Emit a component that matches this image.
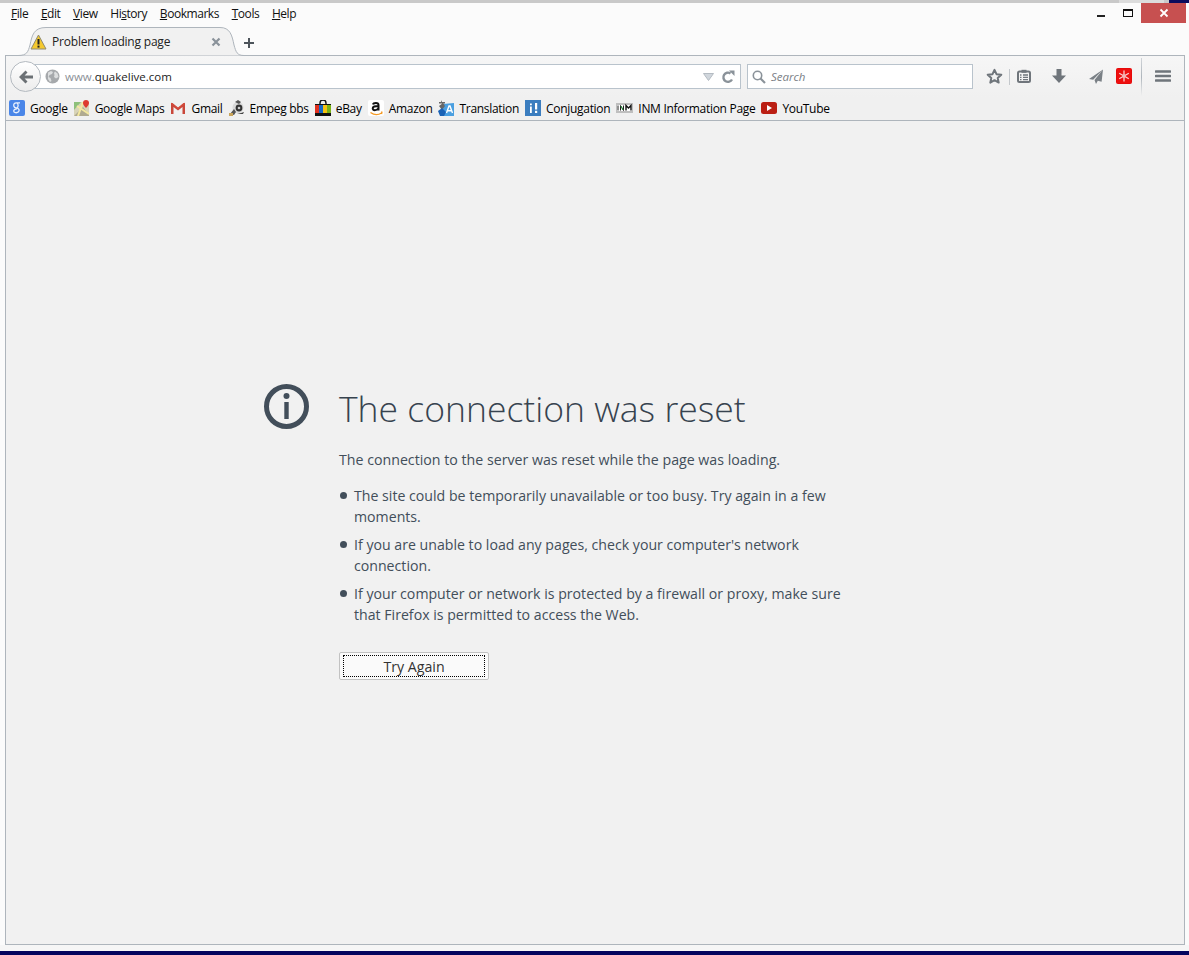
<div class="window">
  <div class="edge"><span class="edge-a"></span><span class="edge-b"></span><span class="edge-c"></span><span class="edge-d"></span></div>

  <div class="menubar">
    <nav class="menus">
      <span><u>F</u>ile</span>
      <span><u>E</u>dit</span>
      <span><u>V</u>iew</span>
      <span>Hi<u>s</u>tory</span>
      <span><u>B</u>ookmarks</span>
      <span><u>T</u>ools</span>
      <span><u>H</u>elp</span>
    </nav>
    <div class="winctl">
      <span class="min"></span>
      <span class="max"></span>
      <span class="close">
        <svg width="10" height="10" viewBox="0 0 10 10"><path d="M1.5 1.5l7 7M8.5 1.5l-7 7" stroke="#fff" stroke-width="1.8"/></svg>
      </span>
    </div>
  </div>

  <div class="tabstrip">
    <div class="tab">
      <svg class="tabshape" width="226" height="29" viewBox="0 0 226 29">
        <path d="M0 28.5C9 28.5 10 25 12 18 14 8 16 .5 28 .5H202C212 .5 214 8 216 18 218 25 219 28.5 226 28.5" fill="#f1f1f1" stroke="#aeb5bc"/>
      </svg>
      <svg class="ticon" width="17" height="16" viewBox="0 0 17 16">
        <path d="M8.5 1L16 15H1z" fill="#f5c92e" stroke="#8f8a70" stroke-linejoin="round"/>
        <path d="M8.5 5v5.5" stroke="#222" stroke-width="2"/><rect x="7.5" y="11.6" width="2" height="2" fill="#222"/>
      </svg>
      <span class="tabtitle">Problem loading page</span>
      <svg class="tabclose" width="10" height="10" viewBox="0 0 10 10"><path d="M1.5 1.5l7 7M8.5 1.5l-7 7" stroke="#8a929a" stroke-width="2.2"/></svg>
    </div>
    <svg class="plus" width="12" height="12" viewBox="0 0 12 12"><path d="M6 1v10M1 6h10" stroke="#4d545b" stroke-width="2"/></svg>
  </div>

  <div class="frame">
    <div class="toolbar">
      <div class="back">
        <svg width="16" height="14" viewBox="0 0 16 14"><path d="M7.5 0.5L1 7l6.5 6.5 2-2L6.6 8.6H15V5.4H6.6L9.5 2.5z" fill="#6b7074"/></svg>
      </div>
      <div class="urlbar">
        <svg class="globe" width="15" height="15" viewBox="0 0 15 15"><circle cx="7.5" cy="7.5" r="7" fill="#a6a9ac"/><path d="M3 3.5l3-1.5 2 1-1 2-2.5 1L3.500 8l2 1 1 3-1.500 1-2-3zM10 2.500l2.500 2L13.500 8 11 9.500 9 8l.5-2L9 4z" fill="#dcdedf"/></svg>
        <span class="url"><span class="www">www.</span>quakelive.com</span>
        <svg class="drop" width="11" height="8" viewBox="0 0 11 8"><path d="M.5.500h10L5.500 7.500z" fill="#d0d6dc" stroke="#b4bbc2"/></svg>
        <svg class="reload" width="14" height="14" viewBox="0 0 14 14"><path d="M11 9.500A4.600 4.600 0 1 1 9.500 3.400" fill="none" stroke="#8a9299" stroke-width="2.400"/><path d="M8 0.500h5.500V6z" fill="#8a9299"/></svg>
      </div>
      <div class="search">
        <svg width="14" height="14" viewBox="0 0 14 14"><circle cx="5.500" cy="5.500" r="4.200" fill="none" stroke="#8a9299" stroke-width="1.600"/><path d="M8.500 8.500L13 13" stroke="#8a9299" stroke-width="2.200"/></svg>
        <span>Search</span>
      </div>
      <div class="tools">
        <svg class="t-star" width="17" height="16" viewBox="0 0 17 16"><path d="M8.500 1.800l2 4.400 4.800.5-3.600 3.200 1 4.700-4.200-2.400-4.200 2.400 1-4.700L1.700 6.700l4.800-.5z" fill="none" stroke="#6f757b" stroke-width="2" stroke-linejoin="round"/></svg>
        <span class="t-sep"></span>
        <svg class="t-clip" width="14" height="14" viewBox="0 0 14 14"><rect x="1" y="2.500" width="12" height="10.500" rx="1.500" fill="none" stroke="#6f757b" stroke-width="2"/><path d="M4.500 .8h5v3h-5z" fill="#6f757b"/><path d="M3 6h1.500M6 6h5M3 8.300h1.500M6 8.300h5M3 10.600h1.500M6 10.600h5" stroke="#6f757b" stroke-width="1.300"/></svg>
        <svg class="t-down" width="14" height="14" viewBox="0 0 14 14"><path d="M4.500 0h5v6.500H14L7 14 0 6.500h4.500z" fill="#6f757b"/></svg>
        <svg class="t-plane" width="14" height="15" viewBox="0 0 14 15"><path d="M14 .5L0 10l4.200.8zM14 .5L5.500 11 7 15l1.800-3.200 3.800 1z" fill="#7a8086"/></svg>
        <svg class="t-red" width="16" height="16" viewBox="0 0 16 16"><rect width="16" height="16" rx="2" fill="#e60a0a"/><path d="M1 1h14v14H1z" fill="#ee0f0f"/><path d="M8 2.500v11M3.200 5.200l9.600 5.600M3.200 10.800l9.600-5.600" stroke="#f8d0d0" stroke-width="1.300"/><circle cx="8" cy="8" r="1.800" fill="#f3b5b5"/></svg>
        <span class="t-sep2"></span>
        <svg class="t-menu" width="16" height="12" viewBox="0 0 16 12"><path d="M1 1.500h14M1 6h14M1 10.500h14" stroke="#6f757b" stroke-width="2.600" stroke-linecap="round"/></svg>
      </div>
    </div>

    <div class="bookmarks">
      <span class="bm">
        <svg width="16" height="16" viewBox="0 0 16 16"><rect width="16" height="16" rx="2" fill="#4a86e8"/><path d="M11 2.800H7.500C5 2.800 4.500 4.800 4.800 6c.3 1.500 1.800 2 3.200 1.800 2 1 2.800 2.500 1.500 4-1.500 1.500-4.800 1.200-4.800-.8 0-1.500 2-2.200 3.300-2M8 3c1.500 1 1.500 4 0 4.800" fill="none" stroke="#e8f0fd" stroke-width="1.300"/></svg>
        Google
      </span>
      <span class="bm">
        <svg width="16" height="16" viewBox="0 0 16 16"><rect y="2" width="15" height="14" fill="#d8d4b8"/><path d="M0 2h7L0 10z" fill="#8dc07a"/><path d="M0 16l9-9 6 8v1z" fill="#b0aa90"/><path d="M3 6l12 8M9 2L4 16" stroke="#f4e9a0" stroke-width="2"/><path d="M12 0a3 3 0 0 1 3 3c0 2-3 5-3 5S9 5 9 3a3 3 0 0 1 3-3z" fill="#dd3a30"/></svg>
        Google Maps
      </span>
      <span class="bm">
        <svg width="16" height="16" viewBox="0 0 16 16"><path d="M1 3v11h2.500V7L8 10.500 12.500 7v7H15V3h-1.500L8 7.500 2.500 3z" fill="#c9473a"/><path d="M1 3l7 5.500L15 3" fill="none" stroke="#d94a3a" stroke-width="1"/></svg>
        Gmail
      </span>
      <span class="bm">
        <svg width="16" height="16" viewBox="0 0 16 16"><circle cx="9" cy="7.500" r="5.500" fill="#d9d9d9"/><circle cx="10" cy="8" r="3.400" fill="#333"/><circle cx="10" cy="8" r="1.300" fill="#ccc"/><path d="M6 2l3-2 3 2-2 2zM1 14l4-5 2 3-2 3z" fill="#555"/><rect x="0" y="13" width="4" height="3" fill="#c8a45a"/><path d="M8 14h6l1-2-3 1z" fill="#444"/></svg>
        Empeg bbs
      </span>
      <span class="bm">
        <svg width="16" height="16" viewBox="0 0 16 16"><path d="M5 5V3a3 3 0 0 1 6 0v2" fill="none" stroke="#111" stroke-width="1.400"/><rect y="4" width="16" height="12" fill="#111"/><rect y="5" width="4" height="8" fill="#e0301e"/><rect x="4" y="5" width="4" height="8" fill="#1668c7"/><rect x="8" y="5" width="4" height="8" fill="#f5c211"/><rect x="12" y="5" width="4" height="8" fill="#7ab317"/></svg>
        eBay
      </span>
      <span class="bm">
        <svg width="16" height="16" viewBox="0 0 16 16"><rect width="16" height="16" rx="2" fill="#fff"/><path d="M5 4.500C5.500 2.500 10.500 2 10.500 5v5.500M10.500 6C7 6 4.500 6.500 4.700 8.500 5 11 9.500 10.500 10.500 8" fill="none" stroke="#111" stroke-width="2"/><path d="M2.500 12.500c3.500 2.500 8 2.500 11 .5M14 11.500l-.500 2.500" fill="none" stroke="#f59a23" stroke-width="1.400"/></svg>
        Amazon
      </span>
      <span class="bm">
        <svg width="16" height="16" viewBox="0 0 16 16"><path d="M5 4l11-1v13H5z" fill="#4a9fe0"/><path d="M3 0l1 2h3v1.500H1V2h2zM1 6l4-3 2 3-3 4z" fill="#666"/><path d="M0 11l4-3 4 4-2 4H2z" fill="#1b62b5"/><path d="M8.500 13L11 6h1l2.500 7M9.700 10.800h3.600" fill="none" stroke="#fff" stroke-width="1.400"/></svg>
        Translation
      </span>
      <span class="bm">
        <svg width="16" height="16" viewBox="0 0 16 16"><rect width="16" height="16" fill="#3b7dbf"/><path d="M5 6.500h1.800v6.500H5zM5 3.500h1.800v1.800H5zM10 3h2.200v6.500H10zM10 10.800h2.200V13H10z" fill="#fff"/></svg>
        Conjugation
      </span>
      <span class="bm">
        <svg width="17" height="16" viewBox="0 0 17 16"><rect y="3" width="17" height="10" fill="#bfbfbf"/><rect x="1" y="5" width="15" height="6" fill="#fff"/><path d="M2 5.500v5M4.500 10.500v-5l3 5v-5" fill="none" stroke="#222" stroke-width="1"/><path d="M5 6l2 4" stroke="#2a9a40"/><path d="M10 10.500v-5l2.500 2.500 2.500-2.500v5" fill="none" stroke="#111" stroke-width="1.400"/></svg>
        INM Information Page
      </span>
      <span class="bm">
        <svg width="16" height="16" viewBox="0 0 16 16"><rect y="2" width="16" height="12" rx="2.500" fill="#bb1f14"/><path d="M6 5l5 3-5 3z" fill="#fff"/></svg>
        YouTube
      </span>
    </div>

    <main class="page">
      <div class="error">
        <svg class="info" width="45" height="45" viewBox="0 0 45 45">
          <circle cx="22.500" cy="22.500" r="20" fill="none" stroke="#424e5a" stroke-width="5"/>
          <circle cx="22.500" cy="12" r="3" fill="#424e5a"/>
          <rect x="20.300" y="18" width="4.400" height="17" fill="#424e5a"/>
        </svg>
        <div class="body">
          <h1>The connection was reset</h1>
          <p>The connection to the server was reset while the page was loading.</p>
          <ul>
            <li>The site could be temporarily unavailable or too busy. Try again in a few<br>moments.</li>
            <li>If you are unable to load any pages, check your computer's network<br>connection.</li>
            <li>If your computer or network is protected by a firewall or proxy, make sure<br>that Firefox is permitted to access the Web.</li>
          </ul>
          <button><span>Try Again</span></button>
        </div>
      </div>
    </main>
  </div>

  <div class="taskbar"></div>
</div>

<style>
  :global(body) { margin: 0; background: #fbfbfb; }
  .window {
    width: 1189px; height: 955px; overflow: hidden;
    display: flex; flex-direction: column;
    background: #fbfbfb;
    font-family: "Open Sans", "Noto Sans", sans-serif;
  }
  .edge { height: 3px; flex: none; display: flex; background: #fbfbfb; }
  .edge span { height: 2.500px; display: block; }
  .edge-a { width: 1119px; background: #c9c9c9; }
  .edge-b { width: 45px; background: #dcdcdc; }
  .edge-c { width: 5px; background: #c9c9c9; }
  .edge-d { flex: 1; background: #0b0b5c; }

  .menubar { height: 20px; flex: none; display: flex; align-items: flex-start; background: #fbfbfb; }
  .menus { display: flex; gap: 12.700px; padding: 2px 0 0 11px; font-size: 12px; line-height: 17px; color: #111; letter-spacing: -0.45px; }
  .winctl { margin-left: auto; display: flex; align-items: flex-start; margin-right: 3px; }
  .min { width: 8px; height: 2px; background: #222; margin: 12px 18px 0 0; }
  .max { width: 8px; height: 5px; border: 1px solid #111; border-top-width: 2px; margin: 6px 8px 0 0; }
  .close { width: 45px; height: 20px; background: #c75050; display: flex; align-items: center; justify-content: center; }

  .tabstrip { height: 33px; flex: none; display: flex; align-items: flex-end; padding-left: 18px; margin-bottom: -1px; position: relative; z-index: 1; }
  .tab { width: 226px; height: 29px; position: relative; display: flex; align-items: center; padding-left: 12px; box-sizing: border-box; }
  .tabshape { position: absolute; left: 0; top: 0; }
  .ticon { position: relative; margin-right: 5px; flex: none; }
  .tabtitle { position: relative; font-size: 12px; color: #222; letter-spacing: -0.2px; white-space: nowrap; }
  .tabclose { position: absolute; left: 193px; top: 10px; }
  .plus { margin: 0 0 7px -1px; }

  .frame { flex: none; height: 890px; margin: 0 4px 0 5px; border: 1px solid #aeb5bc; box-sizing: border-box; display: flex; flex-direction: column; background: #f0f0f0; }
  .toolbar { height: 41px; flex: none; display: flex; align-items: flex-start; background: linear-gradient(#f6f6f6, #f0f0f0); position: relative; }
  .back {
    border-radius: 50%; border: 1px solid #b4bac0; background: linear-gradient(#fff, #ececec);
    display: flex; align-items: center; justify-content: center;
    margin: 5px 0 0 4px; position: relative; z-index: 2; flex: none;
    width: 29px; height: 29px;
  }
  .urlbar {
    width: 710px; height: 25px; margin: 8px 0 0 -10px; box-sizing: border-box; flex: none;
    border: 1px solid #b9c3cc; background: #fff; display: flex; align-items: center; padding: 0 3px 0 13px;
  }
  .globe { flex: none; margin-right: 5px; }
  .url { font-size: 11.500px; color: #222; letter-spacing: 0; }
  .www { color: #8b8f97; }
  .drop { margin-left: auto; }
  .reload { margin-left: 7px; margin-right: 2px; }
  .search {
    width: 226px; height: 25px; margin: 8px 0 0 6px; box-sizing: border-box; flex: none;
    border: 1px solid #b9c3cc; background: #fff; display: flex; align-items: center; gap: 5px; padding-left: 4px;
    font-size: 11.500px; font-style: italic; color: #7b8086;
  }
  .tools { flex: 1; height: 41px; position: relative; display: flex; align-items: flex-start; }
  .tools > * { flex: none; }
  .t-star { margin: 12px 0 0 13px; }
  .t-sep { width: 1px; height: 16px; background: #c4c8cc; margin: 13px 0 0 6px; }
  .t-clip { margin: 13px 0 0 7px; }
  .t-down { margin: 13px 0 0 21px; }
  .t-plane { margin: 13px 0 0 23px; }
  .t-red { margin: 12px 0 0 13px; }
  .t-sep2 { width: 1px; height: 38px; background: linear-gradient(#d0d4d8, #aeb5bc 50%, #f0f0f0); margin: 2px 0 0 9px; }
  .t-menu { margin: 14px 0 0 13px; }

  .bookmarks { height: 24px; flex: none; display: flex; align-items: center; gap: 6px; padding: 0 0 1px 3px; box-sizing: border-box; background: #f0f0f0; border-bottom: 1px solid #aeb5bc; font-size: 12px; color: #000; letter-spacing: -0.3px; white-space: nowrap; }
  .bm { display: flex; align-items: center; gap: 5px; }

  .page { flex: 1; display: flex; align-items: center; padding: 0 0 0 258px; background: #f1f1f1; }
  .error { display: flex; gap: 30px; color: #424e5a; }
  .info { flex: none; margin-top: -1px; }
  .body { width: 512px; }
  h1 { margin: 0 0 18px; font-size: 35.500px; line-height: 46px; font-weight: 300; color: #37434f; white-space: nowrap; }
  p { margin: 0 0 15px; font-size: 14.200px; line-height: 21px; white-space: nowrap; }
  ul { margin: 0 0 27px; padding: 0 0 0 15px; list-style: none; font-size: 14.150px; line-height: 21px; white-space: nowrap; }
  li { margin-bottom: 7px; position: relative; }
  li:last-child { margin-bottom: 0; }
  li::before { content: ""; position: absolute; left: -14px; top: 7px; width: 7px; height: 7px; border-radius: 50%; background: #424e5a; }
  button {
    width: 150px; height: 28px; padding: 2px 3px; box-sizing: border-box; display: block;
    background: #fafafa; border: 1px solid #c2c2c2; border-radius: 2px;
    font: inherit; font-size: 14.200px; color: #333;
  }
  button span { display: flex; height: 100%; align-items: center; justify-content: center; border: 1px dotted #000; box-sizing: border-box; }

  .taskbar { flex: 1; min-height: 0; border-top: 6px solid #f6f6f6; background: #04045e; }
</style>
